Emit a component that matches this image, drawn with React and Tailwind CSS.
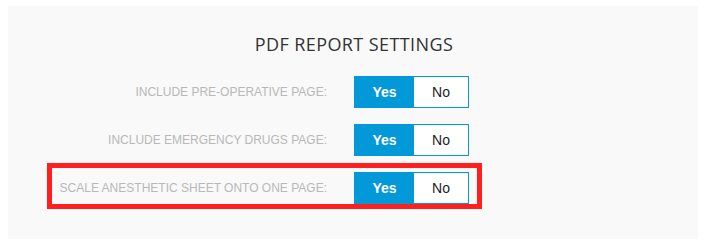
import { useState } from 'react';

const rows = [
  { key: 'preop', label: 'INCLUDE PRE-OPERATIVE PAGE:' },
  { key: 'drugs', label: 'INCLUDE EMERGENCY DRUGS PAGE:' },
  { key: 'scale', label: 'SCALE ANESTHETIC SHEET ONTO ONE PAGE:', highlight: true },
];

const Toggle = ({ value, onChange }) => (
  <div className="flex h-[32px] w-[115px] border border-[#0398d8] text-[14px]">
    <button
      onClick={() => onChange(true)}
      className={`w-[59px] ${value ? 'bg-[#0398d8] text-white font-semibold' : 'bg-white text-[#222]'}`}
    >
      Yes
    </button>
    <button
      onClick={() => onChange(false)}
      className={`flex-1 ${!value ? 'bg-[#0398d8] text-white font-semibold' : 'bg-white text-[#222]'}`}
    >
      No
    </button>
  </div>
);

const App = () => {
  const [settings, setSettings] = useState({ preop: true, drugs: true, scale: true });

  return (
    <div className="min-h-screen bg-white pl-[8px] pt-[6px] font-['Liberation_Sans',Arial,sans-serif]">
      <div className="w-[690px] h-[233px] bg-[#f9f9f9] pt-[26px]">
        {/* Titulo */}
        <h2 className="text-center text-[18px] leading-[24px] tracking-[0.4px] text-[#333] font-['Open_Sans',sans-serif] mb-[11px] pl-[2px]">
          PDF REPORT SETTINGS
        </h2>

        <div className="flex flex-col gap-[2px] ml-[39px] w-[435px]">
          {rows.map((row) => (
            <div
              key={row.key}
              className={`border-[5px] ${row.highlight ? 'border-[#ff1f1f]' : 'border-transparent'}`}
            >
              <div className="flex items-center justify-end h-[36px] pt-[4px] pr-[8px]">
                <span className="text-[12px] text-[#b8b8b8] mr-[27px] whitespace-nowrap">{row.label}</span>
                <Toggle
                  value={settings[row.key]}
                  onChange={(v) => setSettings({ ...settings, [row.key]: v })}
                />
              </div>
            </div>
          ))}
        </div>
      </div>
    </div>
  );
};

export default App;
